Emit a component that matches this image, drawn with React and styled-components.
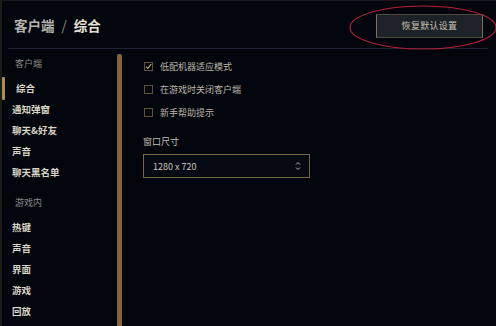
import React from 'react';
import styled, { createGlobalStyle } from 'styled-components';

const GlobalStyle = createGlobalStyle`
  html, body {
    margin: 0;
    padding: 0;
    background: #03050d;
  }
  body {
    font-family: "Noto Sans CJK SC", "Noto Sans", sans-serif;
  }
`;

const Frame = styled.div`
  position: relative;
  width: 496px;
  height: 326px;
  box-sizing: border-box;
  background: #03050d;
  border-top: 1px solid #17181c;
  border-left: 2px solid #1b1b18;
  overflow: hidden;
  display: flex;
  flex-direction: column;
`;

const Header = styled.div`
  height: 47px;
  margin: 0 8px 0 6px;
  padding: 0 5px 0 6px;
  display: flex;
  align-items: center;
  justify-content: space-between;
  border-bottom: 1px solid #1d2434;
  flex-shrink: 0;
`;

const Title = styled.div`
  font-size: 13.5px;
  font-weight: 700;
  color: #b3b1aa;
  display: flex;
  align-items: center;
  gap: 7px;
  margin-top: 1px;
`;

const Slash = styled.span`
  color: #8c8b86;
  font-weight: 400;
`;

const Current = styled.span`
  color: #e6e2d6;
`;

const ResetButton = styled.button`
  width: 107px;
  height: 24px;
  margin-top: 2px;
  background: #1d2228;
  border: 1px solid #4e4a3c;
  border-left-color: #7e7256;
  border-right-color: #7e7256;
  color: #c9c3b0;
  font-family: inherit;
  font-size: 9px;
  letter-spacing: 0.3px;
  padding: 0;
`;

const Ring = styled.svg`
  position: absolute;
  left: 346px;
  top: 3px;
  pointer-events: none;
`;

const Body = styled.div`
  flex: 1;
  display: flex;
`;

const Sidebar = styled.nav`
  width: 115px;
  padding-top: 4px;
  display: flex;
  flex-direction: column;
`;

const SectionLabel = styled.div`
  height: 21px;
  line-height: 21px;
  padding-left: 13px;
  margin-top: ${(p) => (p.$first ? 0 : 9)}px;
  margin-bottom: 4px;
  font-size: 9px;
  color: #8b8a86;
`;

const NavItem = styled.div`
  position: relative;
  height: 21px;
  line-height: 21px;
  padding-left: ${(p) => (p.$active ? 14 : 10)}px;
  font-size: 9.5px;
  font-weight: 700;
  color: #d9d5c6;

  &::before {
    content: '';
    display: ${(p) => (p.$active ? 'block' : 'none')};
    position: absolute;
    left: 0;
    top: -1px;
    width: 3px;
    height: 23px;
    background: #b08c4e;
    border-radius: 1px;
  }
`;

const Rail = styled.div`
  width: 5px;
  margin-top: 5px;
  background: #84663a;
  border-radius: 2px 2px 0 0;
`;

const Content = styled.div`
  flex: 1;
  padding: 6px 0 0 22px;
  display: flex;
  flex-direction: column;
`;

const CheckRow = styled.label`
  height: 23px;
  display: flex;
  align-items: center;
  gap: 7px;
  font-size: 9px;
  color: #bbb6a8;
`;

const Box = styled.span`
  width: 7px;
  height: 7px;
  border: 1px solid #5f5038;
  display: flex;
  align-items: center;
  justify-content: center;
  flex-shrink: 0;
`;

const FieldLabel = styled.div`
  margin: 12px 0 0 -1px;
  font-size: 9px;
  color: #c1bdb1;
  line-height: 12px;
`;

const Select = styled.div`
  box-sizing: border-box;
  margin: 6px 0 0 -1px;
  width: 167px;
  height: 24px;
  border: 1px solid #756646;
  background: #060a12;
  display: flex;
  align-items: center;
  justify-content: space-between;
  padding: 0 8px 0 9px;
  font-size: 9px;
  color: #c9c5b8;
`;

const sections = [
  { label: '客户端', items: ['综合', '通知弹窗', '聊天&好友', '声音', '聊天黑名单'] },
  { label: '游戏内', items: ['热键', '声音', '界面', '游戏', '回放'] },
];

const options = [
  { text: '低配机器适应模式', checked: true },
  { text: '在游戏时关闭客户端', checked: false },
  { text: '新手帮助提示', checked: false },
];

export default function App() {
  return (
    <Frame>
      <GlobalStyle />
      <Header>
        <Title>
          <span>客户端</span>
          <Slash>/</Slash>
          <Current>综合</Current>
        </Title>
        <ResetButton>恢复默认设置</ResetButton>
      </Header>
      <Ring width="150" height="48" viewBox="0 0 150 48">
        <ellipse cx="75" cy="23.5" rx="73" ry="21.5" fill="none" stroke="#b3213a" strokeWidth="1.1" />
      </Ring>
      <Body>
        <Sidebar>
          {sections.map((s, i) => (
            <React.Fragment key={s.label}>
              <SectionLabel $first={i === 0}>{s.label}</SectionLabel>
              {s.items.map((item, j) => (
                <NavItem key={item + j} $active={i === 0 && j === 0}>{item}</NavItem>
              ))}
            </React.Fragment>
          ))}
        </Sidebar>
        <Rail />
        <Content>
          {options.map((o) => (
            <CheckRow key={o.text}>
              <Box>
                {o.checked && (
                  <svg width="7" height="7" viewBox="0 0 7 7">
                    <path d="M1 3.6 L2.8 5.4 L6.2 1.2" fill="none" stroke="#c3a46a" strokeWidth="1.1" />
                  </svg>
                )}
              </Box>
              {o.text}
            </CheckRow>
          ))}
          <FieldLabel>窗口尺寸</FieldLabel>
          <Select>
            <span>1280 x 720</span>
            <svg width="6" height="10" viewBox="0 0 6 10">
              <path d="M1 3.5 L3 1.5 L5 3.5 M1 6.5 L3 8.5 L5 6.5" fill="none" stroke="#b9b4a6" strokeWidth="1" />
            </svg>
          </Select>
        </Content>
      </Body>
    </Frame>
  );
}
